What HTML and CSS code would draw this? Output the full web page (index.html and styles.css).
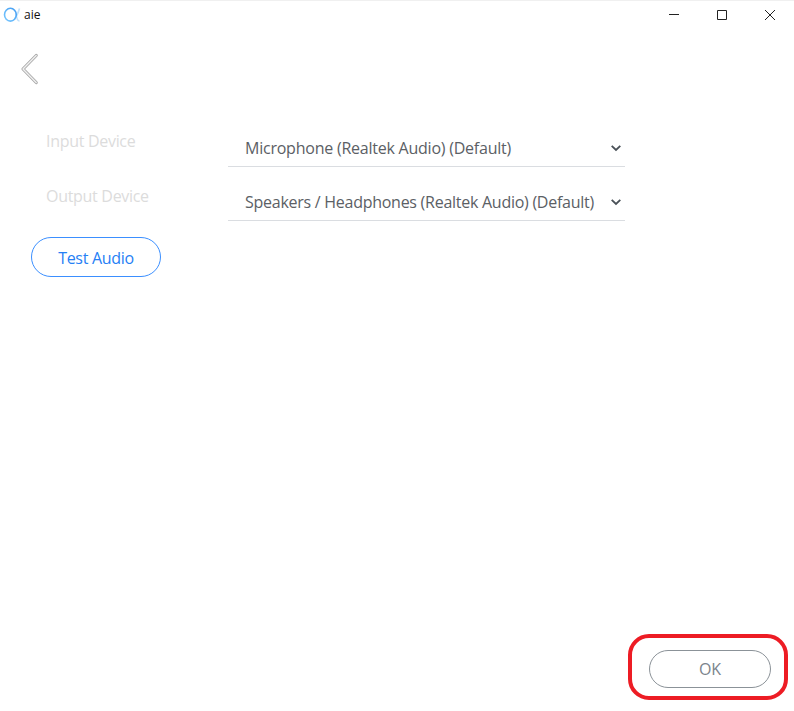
FILE: index.html
```html
<!DOCTYPE html>
<html lang="en">
<head>
<meta charset="utf-8">
<title>aie</title>
<link rel="stylesheet" href="styles.css">
</head>
<body>
<div class="window">
  <header class="titlebar">
    <svg class="logo" width="18" height="16" viewBox="0 0 18 16" fill="none">
      <defs><linearGradient id="ring" x1="0" y1="1" x2="1" y2="0"><stop stop-color="#79c8ff"/><stop offset="1" stop-color="#429cf2"/></linearGradient></defs>
      <path d="M16.500 1.500C15.500 5 14 9 11.500 12M13 6.500C13.500 11 14.500 14 16.500 14" stroke="#c0e1fc" stroke-width="1.6"/>
      <ellipse cx="7.400" cy="7.700" rx="5.900" ry="6.400" stroke="url(#ring)" stroke-width="1.6"/>
    </svg>
    <span class="title">aie</span>
    <div class="controls">
      <svg width="12" height="12" viewBox="0 0 12 12"><path d="M1 5.500h10" stroke="#222"/></svg>
      <svg width="12" height="12" viewBox="0 0 12 12"><path d="M1.500 1.500h9v9h-9z" fill="none" stroke="#222"/></svg>
      <svg width="12" height="12" viewBox="0 0 12 12"><path d="M1 1l10 10M11 1L1 11" stroke="#222"/></svg>
    </div>
  </header>
  <nav class="back">
    <svg width="20" height="32" viewBox="0 0 20 32" fill="none" stroke-linejoin="round" stroke-linecap="round">
      <path d="M16.200 2.500L3 16l13.200 13.500" stroke="#a6a6a6" stroke-width="3.2"/>
      <path d="M16.200 2.500L3 16l13.200 13.500" stroke="#f0f0f0" stroke-width="1.4"/>
    </svg>
  </nav>
  <main class="settings">
    <div class="row">
      <span class="label input-label">Input Device</span>
      <div class="select"><span class="value input-value">Microphone (Realtek Audio) (Default)</span>
        <svg width="12" height="8" viewBox="0 0 12 8"><path d="M1.700 1.800L6 6l4.300-4.200" fill="none" stroke="#495057" stroke-width="1.8"/></svg>
      </div>
    </div>
    <div class="row">
      <span class="label output-label">Output Device</span>
      <div class="select"><span class="value output-value">Speakers / Headphones (Realtek Audio) (Default)</span>
        <svg width="12" height="8" viewBox="0 0 12 8"><path d="M1.700 1.800L6 6l4.300-4.200" fill="none" stroke="#495057" stroke-width="1.8"/></svg>
      </div>
    </div>
    <button class="pill test">Test Audio</button>
  </main>
  <footer class="footer">
    <div class="highlight"><button class="pill ok">OK</button></div>
  </footer>
</div>
</body>
</html>
```
FILE: styles.css
```css
* { box-sizing: border-box; }
body { margin: 0; background: #fff; font: 16px/24px "Open Sans", "Noto Sans", sans-serif; }
.window { height: 711px; display: flex; flex-direction: column; border-top: 1px solid #f0f0f0; }
.titlebar { height: 28px; flex: none; display: flex; align-items: center; padding: 0 18px 0 3px; }
.title { margin-left: 3px; font-size: 12px; color: #111; }
.controls { margin-left: auto; display: flex; gap: 36px; padding-bottom: 1px; }
.controls svg { display: block; }
.back { height: 84px; flex: none; padding: 24px 0 0 20px; }
.back svg { display: block; }
.settings { padding-left: 31px; }
.row { display: flex; height: 54px; width: 594px; }
.label { width: 197px; padding: 16px 0 0 15px; color: #dcdcdc; white-space: nowrap; letter-spacing: -0.3px; }
.select { flex: 1; display: flex; align-items: center; justify-content: space-between; padding: 16px 3px 0 17px; border-bottom: 1px solid #dadde1; color: #5b6065; white-space: nowrap; }
.input-value { letter-spacing: -0.23px; }
.output-value { letter-spacing: -0.265px; }
.output-label { padding-top: 17px; }
.pill { display: flex; align-items: center; justify-content: center; padding: 0 0 1px; background: #fff; font: inherit; border-radius: 20px; }
.test { width: 130px; height: 40px; margin-top: 16px; padding: 1px 0 0; border: 1px solid #3b8fff; color: #2680f5; letter-spacing: -0.3px; }
.footer { margin-top: auto; display: flex; justify-content: flex-end; padding: 0 6px 11px 0; }
.highlight { width: 160px; height: 66px; border: 4px solid #ed1c24; border-radius: 21px; padding: 12px 0 0 17px; }
.ok { width: 122px; height: 38px; border: 1px solid #8b9298; color: #7b848c; padding: 0; letter-spacing: -0.2px; }
```
